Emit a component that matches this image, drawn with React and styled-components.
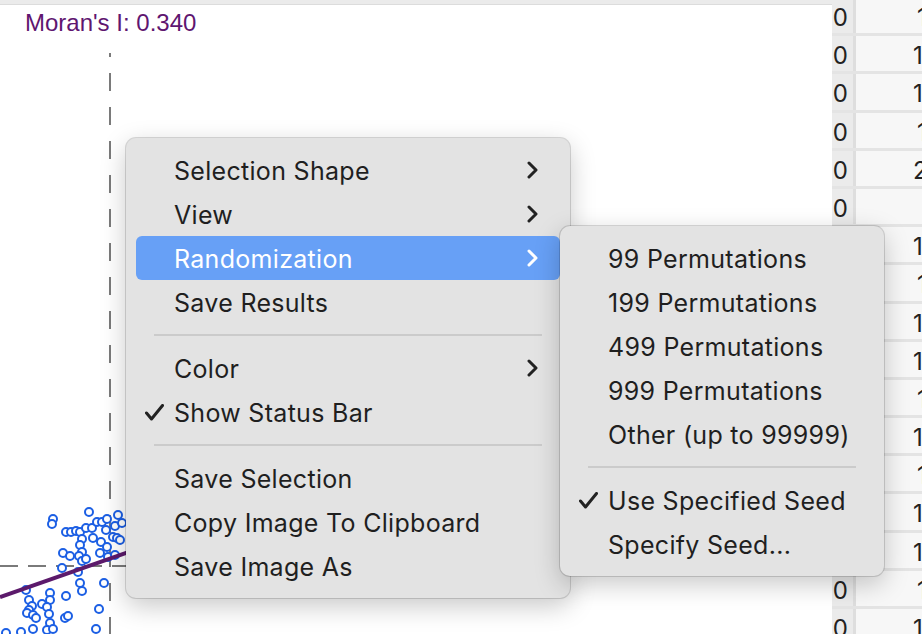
import React from "react";
import styled, { createGlobalStyle } from "styled-components";

const GlobalStyle = createGlobalStyle`
  html, body {
    margin: 0;
    padding: 0;
  }
  body {
    font-family: Inter, "Noto Sans", sans-serif;
    background: #ffffff;
    overflow: hidden;
  }
`;

const Screen = styled.div`
  position: relative;
  display: flex;
  width: 922px;
  height: 634px;
  overflow: hidden;
`;

const PlotPanel = styled.div`
  flex: 0 0 832px;
  display: flex;
  flex-direction: column;
  background: #ffffff;
`;

const TopStrip = styled.div`
  flex-shrink: 0;
  height: 4px;
  background: #ebebeb;
  border-bottom: 1px solid #dcdcdc;
`;

const StatTitle = styled.div`
  flex-shrink: 0;
  height: 28px;
  padding: 4px 0 0 25px;
  font-family: "Liberation Sans", Arial, sans-serif;
  font-size: 24px;
  line-height: 28px;
  color: #5f1670;
`;

const Chart = styled.svg`
  display: block;
  flex-shrink: 0;
`;

const Table = styled.div`
  flex: 1;
  overflow: hidden;
  background: #f7f7f7;
`;

const TableBody = styled.div`
  display: flex;
  flex-direction: column;
  margin-top: -2px;
`;

const Row = styled.div`
  display: flex;
  flex-shrink: 0;
  box-sizing: border-box;
  height: 38.2px;
  border-bottom: 3px solid #e4e4e4;
  font-size: 24px;
  line-height: 31px;
  color: #222222;
`;

const IdCell = styled.div`
  display: flex;
  justify-content: flex-end;
  box-sizing: border-box;
  width: 24px;
  padding: 4px 5px 0 0;
  overflow: hidden;
  white-space: nowrap;
  background: #ebebeb;
  border-right: 3px solid #dedede;
`;

const ValueCell = styled.div`
  flex: 1;
  padding: 4px 0 0 ${({ $indent }) => $indent}px;
  overflow: hidden;
  white-space: nowrap;
`;

const Menu = styled.div`
  position: absolute;
  left: ${({ $left }) => $left}px;
  top: ${({ $top }) => $top}px;
  width: ${({ $width }) => $width}px;
  box-sizing: border-box;
  padding: 10px;
  display: flex;
  flex-direction: column;
  background: #e3e3e3;
  border-radius: 10px;
  box-shadow: 0 0 0 1px rgba(0, 0, 0, 0.14), 0 8px 26px rgba(0, 0, 0, 0.22);
`;

const Item = styled.div`
  display: grid;
  grid-template-columns: 38px 1fr auto;
  align-items: center;
  height: 44px;
  padding-right: 22px;
  border-radius: 6px;
  font-size: 25px;
  letter-spacing: 0.3px;
  color: ${({ $active }) => ($active ? "#ffffff" : "#1f1f1f")};
  background: ${({ $active }) => ($active ? "#67a0f6" : "transparent")};
`;

const Gutter = styled.div`
  display: flex;
  align-items: center;
  padding-left: 9px;
`;

const Label = styled.span`
  white-space: nowrap;
  padding-top: 1px;
`;

const Separator = styled.div`
  height: 2px;
  margin: 10px 18px;
  background: #cbcbcb;
`;

const CheckIcon = () => (
  <svg width="19" height="17" viewBox="0 0 19 17">
    <polyline
      points="1.5,9 6.5,15 17.5,1.5"
      fill="none"
      stroke="#222"
      strokeWidth="3"
      strokeLinecap="round"
      strokeLinejoin="round"
    />
  </svg>
);

const Chevron = ({ color }) => (
  <svg width="11" height="18" viewBox="0 0 11 18">
    <polyline
      points="2,2 9,9 2,16"
      fill="none"
      stroke={color}
      strokeWidth="3"
      strokeLinecap="round"
      strokeLinejoin="round"
    />
  </svg>
);

const mainMenu = [
  { label: "Selection Shape", sub: true },
  { label: "View", sub: true },
  { label: "Randomization", sub: true, active: true },
  { label: "Save Results" },
  "sep",
  { label: "Color", sub: true },
  { label: "Show Status Bar", checked: true },
  "sep",
  { label: "Save Selection" },
  { label: "Copy Image To Clipboard" },
  { label: "Save Image As" },
];

const randomMenu = [
  { label: "99 Permutations" },
  { label: "199 Permutations" },
  { label: "499 Permutations" },
  { label: "999 Permutations" },
  { label: "Other (up to 99999)" },
  "sep",
  { label: "Use Specified Seed", checked: true },
  { label: "Specify Seed..." },
];

const rows = [
  { id: "0", value: "1", indent: 61 },
  { id: "0", value: "1", indent: 57 },
  { id: "0", value: "1", indent: 57 },
  { id: "0", value: "1", indent: 61 },
  { id: "0", value: "2", indent: 57 },
  { id: "0", value: "", indent: 57 },
  { id: "0", value: "1", indent: 57 },
  { id: "0", value: "1", indent: 61 },
  { id: "0", value: "1", indent: 57 },
  { id: "0", value: "1", indent: 57 },
  { id: "0", value: "1", indent: 61 },
  { id: "0", value: "1", indent: 57 },
  { id: "0", value: "1", indent: 61 },
  { id: "0", value: "1", indent: 57 },
  { id: "0", value: "1", indent: 57 },
  { id: "0", value: "1", indent: 61 },
  { id: "0", value: "1", indent: 57 },
];

const points = [
  [89, 512], [53, 519], [52, 524], [66, 532], [71, 532], [76, 531], [80, 532],
  [86, 528], [92, 528], [97, 522], [102, 522], [107, 519], [106, 530], [115, 526],
  [122, 523], [113, 537], [117, 538], [82, 539], [93, 538], [101, 542], [107, 547],
  [80, 545], [82, 552], [79, 556], [82, 561], [86, 559], [100, 553], [108, 557],
  [115, 555], [63, 553], [70, 556], [62, 568], [78, 572], [80, 583], [82, 591],
  [104, 583], [66, 596], [29, 600], [32, 606], [50, 593], [50, 600], [42, 604],
  [47, 607], [49, 614], [50, 623], [29, 610], [27, 613], [33, 615], [36, 618],
  [65, 618], [68, 616], [99, 609], [47, 630], [53, 629], [33, 629], [21, 632],
  [6, 633], [96, 629], [26, 590], [120, 540], [118, 515],
];

const MenuList = ({ items, left, top, width }) => (
  <Menu $left={left} $top={top} $width={width}>
    {items.map((it, i) =>
      it === "sep" ? (
        <Separator key={i} />
      ) : (
        <Item key={i} $active={it.active}>
          <Gutter>{it.checked && <CheckIcon />}</Gutter>
          <Label>{it.label}</Label>
          {it.sub ? <Chevron color={it.active ? "#ffffff" : "#222"} /> : <span />}
        </Item>
      )
    )}
  </Menu>
);

export default function App() {
  return (
    <>
      <GlobalStyle />
      <Screen>
        <PlotPanel>
          <TopStrip />
          <StatTitle>Moran's I: 0.340</StatTitle>
          <Chart width="832" height="597" viewBox="0 37 832 597">
            <line
              x1="110" y1="53" x2="110" y2="640"
              stroke="#7a7a7a" strokeWidth="2"
              strokeDasharray="18 16" strokeDashoffset="14"
            />
            <line
              x1="0" y1="566" x2="600" y2="566"
              stroke="#7a7a7a" strokeWidth="2"
              strokeDasharray="18 10"
            />
            {points.map(([x, y], i) => (
              <circle key={i} cx={x} cy={y} r="4" fill="#fff" stroke="#1c5fe4" strokeWidth="2" />
            ))}
            <line x1="0" y1="597" x2="600" y2="387" stroke="#5c1a6b" strokeWidth="4" />
          </Chart>
        </PlotPanel>
        <Table>
          <TableBody>
            {rows.map((r, i) => (
              <Row key={i}>
                <IdCell>{r.id}</IdCell>
                <ValueCell $indent={r.indent}>{r.value}</ValueCell>
              </Row>
            ))}
          </TableBody>
        </Table>
        <MenuList items={mainMenu} left={126} top={138} width={444} />
        <MenuList items={randomMenu} left={560} top={226} width={324} />
      </Screen>
    </>
  );
}
